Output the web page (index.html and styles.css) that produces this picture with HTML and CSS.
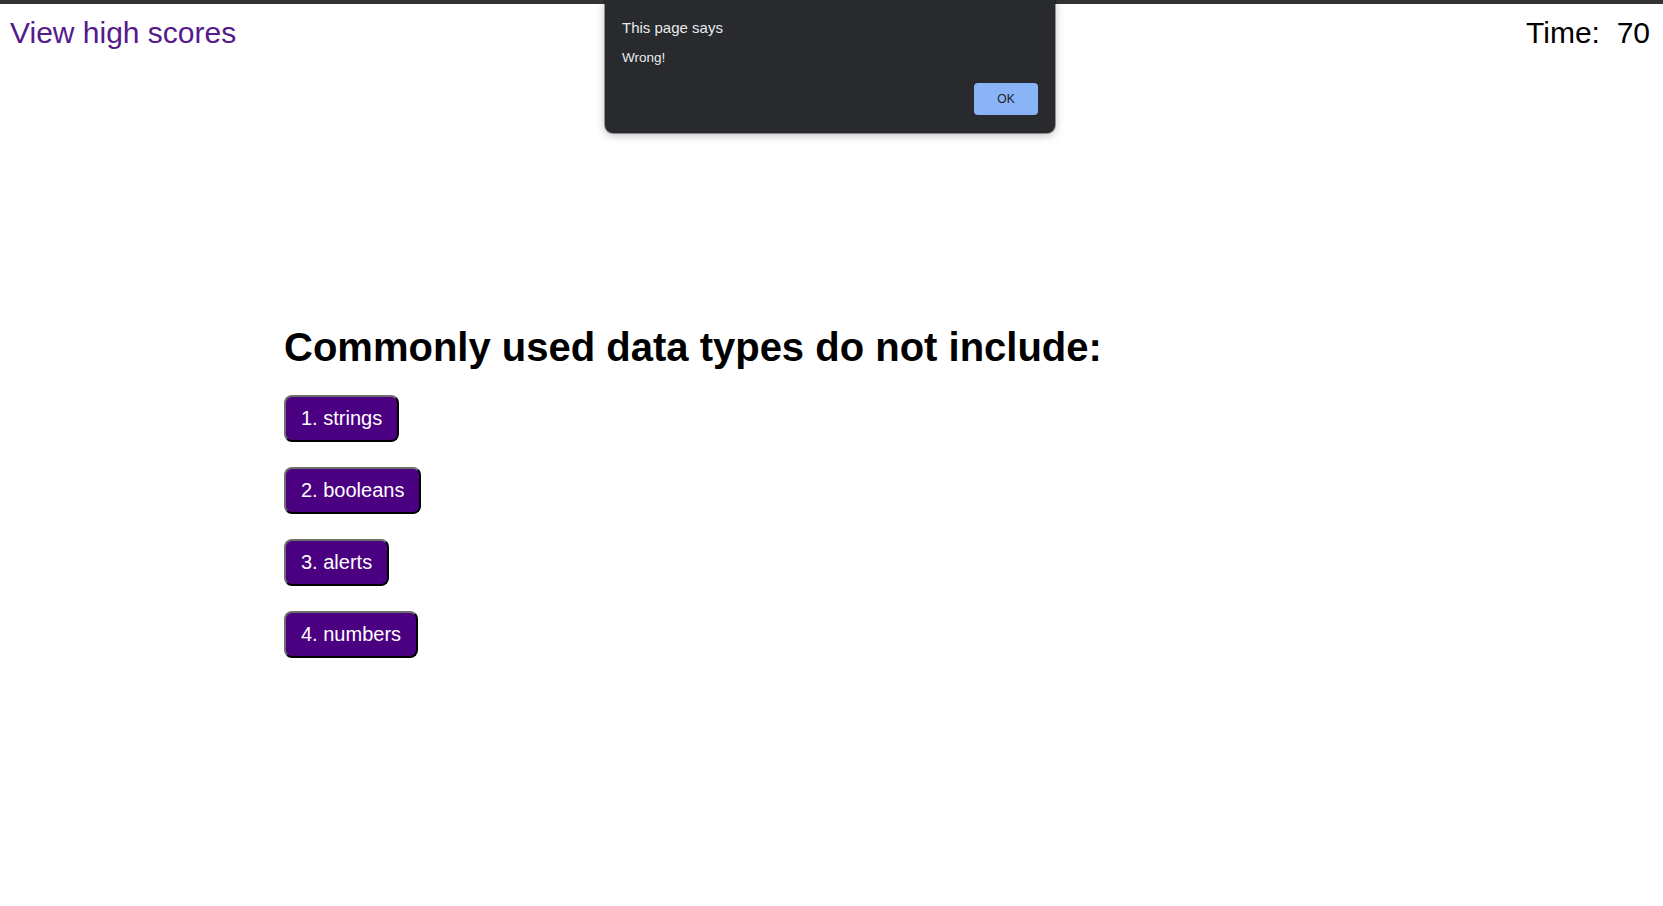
FILE: index.html
```html
<!DOCTYPE html>
<html lang="en">
<head>
<meta charset="utf-8">
<title>Code Quiz</title>
<link rel="stylesheet" href="styles.css">
</head>
<body>
<div class="chrome-bar"></div>
<header class="top">
  <a class="scores-link" href="#">View high scores</a>
  <div class="timer">Time: &nbsp;<span class="time-left">70</span></div>
</header>
<main class="quiz">
  <h1 class="question">Commonly used data types do not include:</h1>
  <div class="choices">
    <div class="choice-row"><button class="choice">1. strings</button></div>
    <div class="choice-row"><button class="choice">2. booleans</button></div>
    <div class="choice-row"><button class="choice">3. alerts</button></div>
    <div class="choice-row"><button class="choice">4. numbers</button></div>
  </div>
</main>
<div class="alert-dialog" role="alertdialog">
  <div class="alert-title">This page says</div>
  <div class="alert-message">Wrong!</div>
  <div class="alert-actions"><button class="alert-ok">OK</button></div>
</div>
</body>
</html>
```
FILE: styles.css
```css
html, body {
  margin: 0;
  padding: 0;
  background: #ffffff;
}
body {
  font-family: "Liberation Sans", Arial, Helvetica, sans-serif;
  color: #000;
  min-height: 906px;
  position: relative;
}
.chrome-bar {
  height: 4px;
  background: #323334;
}
.top {
  display: flex;
  justify-content: space-between;
  align-items: flex-start;
  padding: 12px 13px 0 10px;
  font-size: 30px;
  line-height: 34px;
}
.scores-link {
  color: #551a8b;
  text-decoration: none;
}
.timer {
  color: #000;
  white-space: pre;
}
.quiz {
  padding: 274px 0 0 284px;
}
.question {
  margin: 0;
  font-size: 40px;
  line-height: 46px;
  font-weight: bold;
}
.choices {
  margin-top: 25px;
  display: flex;
  flex-direction: column;
  gap: 25px;
}
.choice-row {
  display: flex;
}
.choice {
  font-family: "Liberation Sans", Arial, Helvetica, sans-serif;
  font-size: 20px;
  line-height: 23px;
  color: #ffffff;
  background: #4b0082;
  border: 2px outset #767676;
  border-color: #6e6e6e #2a2a2a #2a2a2a #6e6e6e;
  border-radius: 8px;
  padding: 10px 15px;
  cursor: pointer;
}
.alert-dialog {
  position: absolute;
  top: 0;
  left: 605px;
  width: 450px;
  box-sizing: border-box;
  padding: 19px 17px 18px 17px;
  background: #292a2d;
  border-radius: 0 0 8px 8px;
  box-shadow: 0 2px 10px rgba(0, 0, 0, 0.28), 0 0 0 1px rgba(0, 0, 0, 0.35);
  color: #e8eaed;
  font-family: "Liberation Sans", Arial, Helvetica, sans-serif;
}
.alert-title {
  font-size: 15px;
  line-height: 17px;
}
.alert-message {
  margin-top: 14px;
  font-size: 13.5px;
  line-height: 16px;
}
.alert-actions {
  display: flex;
  justify-content: flex-end;
  margin-top: 17px;
}
.alert-ok {
  width: 64px;
  height: 32px;
  border: none;
  border-radius: 4px;
  background: #8ab4f8;
  color: #202124;
  font-family: "Liberation Sans", Arial, Helvetica, sans-serif;
  font-size: 12px;
  padding: 0;
}
```
